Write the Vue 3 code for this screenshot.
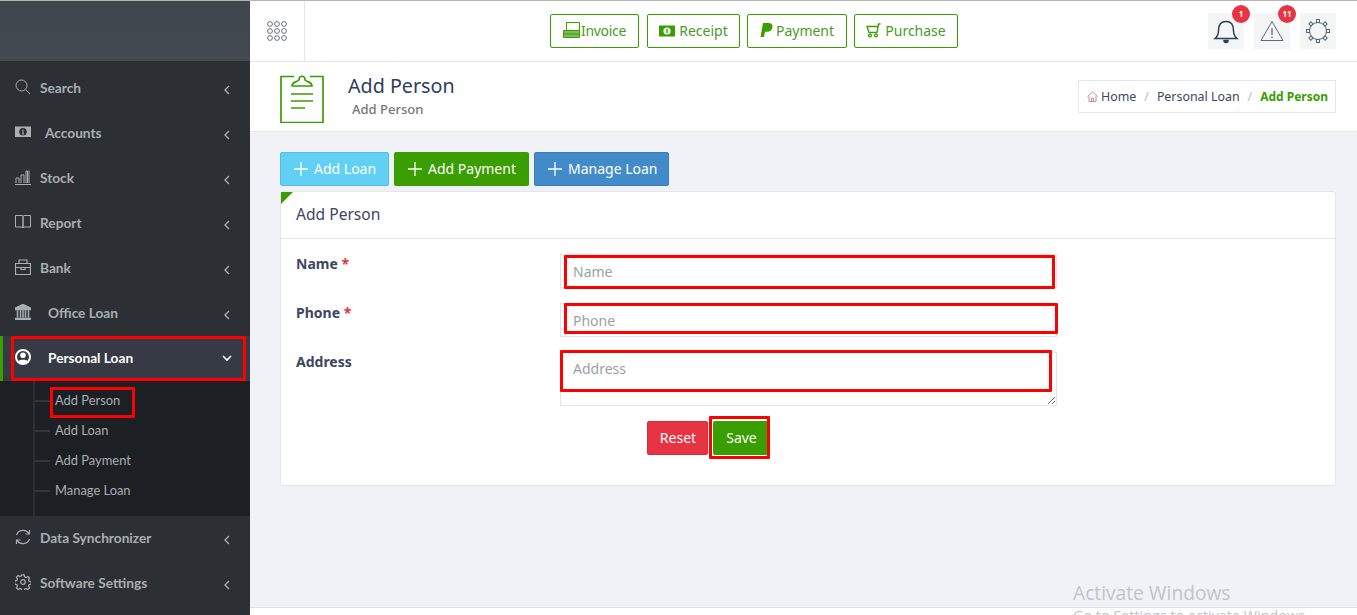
<script setup>
const menuTop = [
  { label: 'Search', icon: 'search', gap: 'g14' },
  { label: 'Accounts', icon: 'money', gap: 'g19' },
  { label: 'Stock', icon: 'chart', gap: 'g14' },
  { label: 'Report', icon: 'book', gap: 'g14' },
  { label: 'Bank', icon: 'case', gap: 'g14' },
  { label: 'Office Loan', icon: 'bank', gap: 'g22' }
]
const subItems = ['Add Person', 'Add Loan', 'Add Payment', 'Manage Loan']
const menuBottom = [
  { label: 'Data Synchronizer', icon: 'sync', gap: 'g14' },
  { label: 'Software Settings', icon: 'gear', gap: 'g14' }
]
const actions = [
  { label: 'Add Loan', cls: 'info' },
  { label: 'Add Payment', cls: 'green' },
  { label: 'Manage Loan', cls: 'blue' }
]
const dots = []
for (let r = 0; r < 3; r++) for (let c = 0; c < 3; c++) dots.push({ x: 3 + c * 7, y: 3 + r * 7 })
const gearTeeth = [0, 45, 90, 135, 180, 225, 270, 315]
</script>

<template>
  <div class="page">
    <aside class="side">
      <div class="brand"></div>
      <nav class="menu">
        <a v-for="m in menuTop" :key="m.label" class="item" :class="m.gap">
          <svg class="mi" viewBox="0 0 16 16" fill="none" stroke="currentColor" stroke-width="1">
            <template v-if="m.icon === 'search'"><circle cx="6.5" cy="6.5" r="5.5" /><path d="M10.5 10.5 15 15" /></template>
            <template v-else-if="m.icon === 'money'"><rect x="0" y="2.5" width="16" height="10.5" fill="currentColor" stroke="none" /><circle cx="8" cy="7.7" r="3.8" fill="#2c3034" stroke="none" /><path d="M8 5.5v4.500M7 10h2" stroke="currentColor" /></template>
            <template v-else-if="m.icon === 'chart'"><path d="M0 15.500h16M1 14V9h3v5M6 14V6h3v8M11 14V2h1.500v12M14 14V1.500" /></template>
            <template v-else-if="m.icon === 'book'"><path d="M.5 1.500h6.500c.6 0 1 .5 1 1v11.500c0-.5-.4-1-1-1H.5zM15.500 1.500H9c-.6 0-1 .5-1 1v11.500c0-.5.4-1 1-1h6.500z" /></template>
            <template v-else-if="m.icon === 'case'"><path d="M.5 4.500h15v11H.5zM4 4.500V1h8v3.500M.5 8.500h15M6 8v2.500h4V8" stroke-width="1.200" /></template>
            <template v-else><path d="M8 .5 15.500 4v1.500H.5V4zM.5 14.500h15V16H.5zM2.500 6.500v7M5.500 6.500v7M8 6.500v7M10.500 6.500v7M13.500 6.500v7" fill="currentColor" stroke-width="1.500" /></template>
          </svg>
          <span class="lbl">{{ m.label }}</span>
          <svg class="chev" viewBox="0 0 8 12" fill="none" stroke="currentColor" stroke-width="1.400"><path d="M6 2 2 6l4 4" /></svg>
        </a>
        <a class="item active">
          <svg class="mi" viewBox="0 0 16 16"><circle cx="8" cy="8" r="7" fill="none" stroke="#fff" stroke-width="2" /><circle cx="8" cy="6.200" r="2.800" fill="#fff" /><path d="M3 12.500c1-2.500 9-2.500 10 0L8 15z" fill="#fff" /></svg>
          <span class="lbl">Personal Loan</span>
          <svg class="chev down" viewBox="0 0 12 8" fill="none" stroke="currentColor" stroke-width="1.600"><path d="M2 2l4 4 4-4" /></svg>
        </a>
        <ul class="sub">
          <li v-for="s in subItems" :key="s">{{ s }}</li>
        </ul>
        <a v-for="m in menuBottom" :key="m.label" class="item" :class="m.gap">
          <svg class="mi" viewBox="0 0 16 16" fill="none" stroke="currentColor" stroke-width="1.200">
            <template v-if="m.icon === 'sync'"><path d="M1.500 6A7 7 0 0 1 14 4.500M14.500 10A7 7 0 0 1 2 11.500M14.500 1v4h-4M1.500 15v-4h4" /></template>
            <template v-else><circle cx="8" cy="8" r="2.300" /><path d="M6.800 .8h2.400l.4 2 1.500.7 1.800-1.100 1.700 1.700-1.100 1.800.7 1.500 2 .4v2.400l-2 .4-.7 1.500 1.100 1.800-1.700 1.700-1.800-1.100-1.500.7-.4 2H6.800l-.4-2-1.500-.7-1.800 1.100-1.700-1.700 1.100-1.800-.7-1.500-2-.4V6.800l2-.4.700-1.500-1.100-1.800 1.700-1.700 1.800 1.100 1.500-.7z" /></template>
          </svg>
          <span class="lbl">{{ m.label }}</span>
          <svg class="chev" viewBox="0 0 8 12" fill="none" stroke="currentColor" stroke-width="1.400"><path d="M6 2 2 6l4 4" /></svg>
        </a>
      </nav>
    </aside>

    <main class="main">
      <header class="top">
        <div class="apps">
          <svg width="22" height="22" viewBox="0 0 22 22" fill="none" stroke="#6b6f82" stroke-width="1">
            <circle v-for="(d, i) in dots" :key="i" :cx="d.x + 1" :cy="d.y + 1" r="2.400" />
          </svg>
        </div>
        <div class="quick">
          <a class="qb">
            <svg width="17" height="17" viewBox="0 0 17 17" fill="none" stroke="#3a9d00"><path d="M3.500 8V.5h13V8" /><path d="M.5 8.500h16v7H.5z" fill="#7fbb5c" /><path d="M.5 12h16" /></svg>
            <span class="inv">Invoice</span>
          </a>
          <a class="qb">
            <svg width="16" height="12" viewBox="0 0 16 12"><rect width="16" height="11" y=".5" fill="#3a9d00" /><circle cx="8" cy="6" r="3.600" fill="#fff" /><rect x="7.300" y="3.800" width="1.400" height="4.400" fill="#3a9d00" /></svg>
            <span>Receipt</span>
          </a>
          <a class="qb">
            <svg width="13" height="16" viewBox="0 0 13 16"><path d="M3 0h5.500C11.500 0 13 1.800 12.400 4.500 11.800 7.500 9.800 8.800 7 8.800H5L4 14H.5z" fill="#3a9d00" /></svg>
            <span>Payment</span>
          </a>
          <a class="qb">
            <svg width="15" height="15" viewBox="0 0 15 15" fill="none" stroke="#3a9d00" stroke-width="1.300"><path d="M14.500 1h-2l-1.500 8.500H3L1 3.500h11" /><circle cx="4" cy="12.500" r="1.400" /><circle cx="10" cy="12.500" r="1.400" /></svg>
            <span>Purchase</span>
          </a>
        </div>
        <div class="tools">
          <div class="tool">
            <svg width="26" height="26" viewBox="0 0 26 26" fill="none" stroke="#2f3d5c" stroke-width="1.500"><path d="M2 20.500c2.500-2 3.500-4 3.500-8C5.500 7 8 3.500 13 3.500S20.500 7 20.500 12.500c0 4 1 6 3.500 8z" /><path d="M11 22.500a2 2 0 0 0 4 0z" fill="#2f3d5c" /></svg>
            <span class="badge">1</span>
          </div>
          <div class="tool">
            <svg width="24" height="22" viewBox="0 0 24 22" fill="none" stroke="#5a6a85"><path d="M12 1.500 23 20.500H1z" /><path d="M12 8v7M12 16.500v1.500" stroke-width="1.300" /></svg>
            <span class="badge">11</span>
          </div>
          <div class="tool">
            <svg width="26" height="26" viewBox="0 0 26 26" fill="none" stroke="#5a6478"><circle cx="13" cy="13" r="8.500" /><rect v-for="a in gearTeeth" :key="a" x="11.500" y="1.500" width="3" height="3" fill="#f4f5f5" :transform="`rotate(${a} 13 13)`" /></svg>
          </div>
        </div>
      </header>

      <section class="head">
        <svg class="clip" width="44" height="52" viewBox="0 0 44 52" fill="none" stroke="#3a9d00" stroke-width="1.700">
          <path d="M14 5.500H1v46h42v-46H30" />
          <path d="M12 15c0-4 5-4 7-6 0-5 6-5 6 0 2 2 7 2 7 6z" />
          <path d="M11 23h22M11 30h22M11 37h14" />
        </svg>
        <div class="titles">
          <h1>Add Person</h1>
          <p>Add Person</p>
        </div>
        <div class="crumb">
          <svg width="11" height="11" viewBox="0 0 11 11" fill="none" stroke="#b08a8a" stroke-width=".9"><path d="M.5 5.500 5.500 1l5 4.500M2 5v5.500h7V5M4.500 10.500V7h2v3.500" /></svg>
          <span class="c1">Home</span><i>/</i>
          <span class="c1">Personal Loan</span><i>/</i>
          <b>Add Person</b>
        </div>
      </section>

      <section class="content">
        <div class="actions">
          <a v-for="a in actions" :key="a.label" class="btn" :class="a.cls">
            <svg class="plus" width="14" height="14" viewBox="0 0 14 14" stroke="#fff" stroke-width="1.300"><path d="M7 0v14M0 7h14" /></svg>
            {{ a.label }}
          </a>
        </div>
        <div class="card">
          <span class="corner"></span>
          <h2>Add Person</h2>
          <form class="form" @submit.prevent>
            <label>Name <em>*</em></label>
            <input placeholder="Name" />
            <label>Phone <em>*</em></label>
            <input placeholder="Phone" />
            <label>Address</label>
            <textarea placeholder="Address"></textarea>
            <div class="form-btns">
              <button type="reset" class="b-reset">Reset</button>
              <button type="submit" class="b-save">Save</button>
            </div>
          </form>
        </div>
      </section>

      <footer class="foot"></footer>
      <div class="activate">
        <div class="a1">Activate Windows</div>
        <div class="a2">Go to Settings to activate Windows.</div>
      </div>
    </main>

    <span class="mark m1"></span>
    <span class="mark m2"></span>
    <span class="mark m3"></span>
    <span class="mark m4"></span>
    <span class="mark m5"></span>
    <span class="mark m6"></span>
  </div>
</template>

<style>
html, body { margin: 0; overflow: hidden; background: #fff; }
</style>

<style scoped>
.page {
  position: relative;
  display: flex;
  width: 1357px;
  height: 615px;
  overflow: hidden;
  font-family: "Noto Sans", "Open Sans", sans-serif;
  box-sizing: border-box;
  border-top: 1px solid #b5b5b5;
}
.page *, .page *::before { box-sizing: border-box; }
.side { width: 250px; flex: none; background: #2c3034; color: #a9aeb2; }
.brand { height: 60px; background: linear-gradient(#3f464e, #424951); }
.menu { padding-top: 5px; font-family: "Lato", sans-serif; font-weight: 700; font-size: 13.7px; }
.item { display: flex; align-items: center; height: 45px; padding: 0 19px 2px 15px; }
.mi { width: 16px; height: 16px; flex: none; margin-top: -2px; }
.lbl { flex: 1; }
.g14 .lbl { margin-left: 9px; }
.g19 .lbl { margin-left: 14px; }
.g22 .lbl { margin-left: 17px; }
.chev { width: 8px; height: 12px; flex: none; margin-top: 4px; }
.chev.down { width: 12px; height: 8px; margin-right: -2px; margin-top: 0; }
.item.active { background: #353a44; color: #fff; border-left: 3px solid #3a9d00; padding-left: 12px; }
.item.active .lbl { margin-left: 17px; }
.sub {
  position: relative;
  margin: 0;
  padding: 4px 0 11px;
  height: 135px;
  background: #1c1f23;
  list-style: none;
  font-weight: 400;
  font-size: 12.900px;
}
.sub::before { content: ""; position: absolute; left: 33px; top: 0; bottom: 0; width: 2px; background: #2c3034; }
.sub li { position: relative; height: 30px; line-height: 30px; padding-left: 55px; }
.sub li::before { content: ""; position: absolute; left: 35px; top: 15px; width: 15px; height: 1.500px; background: #33373c; }

.main { position: relative; flex: 1; display: flex; flex-direction: column; background: #f0f2f7; min-width: 0; }
.top { height: 61px; flex: none; display: flex; align-items: center; background: #fff; border-bottom: 1px solid #e3e6ef; }
.apps { width: 55px; height: 60px; flex: none; display: flex; align-items: center; justify-content: center; border-right: 1px solid #e3e6ef; }
.apps svg { margin-right: 1px; }
.quick { display: flex; gap: 7px; margin-left: 245px; }
.qb {
  display: flex; align-items: center; justify-content: center; gap: 4px;
  height: 34px; padding: 0 0 1px;
  border: 1px solid #3a9d00; border-radius: 2px;
  color: #4a9a2a; font-size: 14px; white-space: nowrap;
}
.qb:nth-child(1) { width: 89px; gap: 1px; margin-right: 1px; }
.qb:nth-child(2) { width: 93px; }
.qb:nth-child(3) { width: 100px; gap: 3px; }
.qb:nth-child(4) { width: 104px; }
.inv { letter-spacing: -0.3px; }
.tools { display: flex; gap: 10px; margin-left: auto; margin-right: 21px; }
.tool { position: relative; width: 36px; height: 36px; background: #f4f5f5; display: flex; align-items: center; justify-content: center; }
.badge {
  position: absolute; top: -8px; right: -6px; width: 18px; height: 18px; border-radius: 50%;
  background: #e83442; color: #fff; font-size: 8px; font-weight: 700; line-height: 18px; text-align: center;
}
.head { height: 70px; flex: none; display: flex; align-items: center; padding: 0 21px 0 30px; background: #fff; border-bottom: 1px solid #e3e6ef; }
.clip { flex: none; margin-top: 1px; }
.titles { margin-left: 24px; margin-top: -4px; }
h1 { margin: 0; font-size: 19.700px; font-weight: 400; line-height: 26px; color: #2f3d5c; }
.titles p { margin: 2px 0 0 4px; font-size: 13px; font-weight: 500; line-height: 16px; color: #777; }
.crumb {
  margin-left: auto; height: 33px; width: 258px; margin-top: -1px;
  display: flex; align-items: center; padding-left: 8px;
  border: 1px solid #e3e6ef; font-size: 12.400px; color: #3b4660; white-space: nowrap;
}
.crumb svg { margin-right: 3px; }
.crumb i { font-style: normal; color: #bbb; margin: 0 8px; }
.crumb b { color: #3a9d00; font-weight: 700; font-size: 12px; }
.content { flex: 1; padding: 20px 21px 0 30px; }
.actions { display: flex; gap: 5px; }
.btn {
  display: flex; align-items: center; height: 34px; padding: 0 0 1px 13px;
  border-radius: 2px; color: #fff; font-size: 14px; border: 1px solid transparent; white-space: nowrap;
}
.btn.info { background: #61d0f2; border-color: #52bfe2; width: 109px; }
.btn.green { background: #3a9d00; width: 135px; }
.btn.blue { background: #428bca; border-color: #3a7fb9; width: 135px; }
.plus { margin-right: 6px; flex: none; }
.card { position: relative; margin-top: 5px; height: 295px; background: #fff; border: 1px solid #e3e6ef; border-radius: 3px; }
.corner { position: absolute; left: 0; top: 0; width: 0; height: 0; border-top: 12px solid #3a9d00; border-right: 12px solid transparent; }
h2 { margin: 0; height: 47px; padding: 0 15px; border-bottom: 1px solid #e3e6ef; font-size: 15.600px; font-weight: 400; line-height: 44px; color: #3b4660; }
.form { display: grid; grid-template-columns: 264px 497px; grid-auto-rows: min-content; row-gap: 15px; padding: 15px 15px 0; }
label { font-size: 14px; font-weight: 700; color: #3b4660; line-height: 20px; padding-top: 0; }
label em { font-style: normal; color: #e83442; }
input, textarea {
  display: block; width: 100%; height: 34px; margin: 0; padding: 6px 12px;
  border: 1px solid #e4e4e4; border-radius: 0; background: #fff; outline: none;
  font: 14px "Noto Sans", "Open Sans", sans-serif; color: #333;
}
input::placeholder, textarea::placeholder { color: #9a9fa8; opacity: 1; }
textarea { height: 54px; }
.form-btns { grid-column: 2; display: flex; gap: 5px; margin-left: 87px; }
.form-btns button { height: 34px; border: 1px solid transparent; border-radius: 2px; color: #fff; font: 14px "Noto Sans", "Open Sans", sans-serif; padding: 0 0 2px 1px; }
.b-reset { width: 61px; background: #e83442; border-color: #d42e3b !important; }
.b-save { width: 56px; background: #3a9d00; }
.foot { height: 8px; flex: none; background: #fff; border-top: 1px solid #dcdfe6; }
.activate { position: absolute; left: 823px; top: 580px; color: #c2c4c8; font-family: "Open Sans", sans-serif; pointer-events: none; white-space: nowrap; }
.a1 { font-size: 19.200px; line-height: 24px; }
.a2 { font-size: 14.400px; line-height: 22px; }
.mark { position: absolute; border: 3px solid #f00; border-radius: 1px; pointer-events: none; }
.m1 { left: 11px; top: 335px; width: 235px; height: 45px; }
.m2 { left: 50px; top: 386px; width: 85px; height: 31px; }
.m3 { left: 564px; top: 254px; width: 491px; height: 34px; }
.m4 { left: 564px; top: 302px; width: 494px; height: 31px; }
.m5 { left: 560px; top: 349px; width: 492px; height: 42px; }
.m6 { left: 709px; top: 415px; width: 61px; height: 43px; }
</style>
